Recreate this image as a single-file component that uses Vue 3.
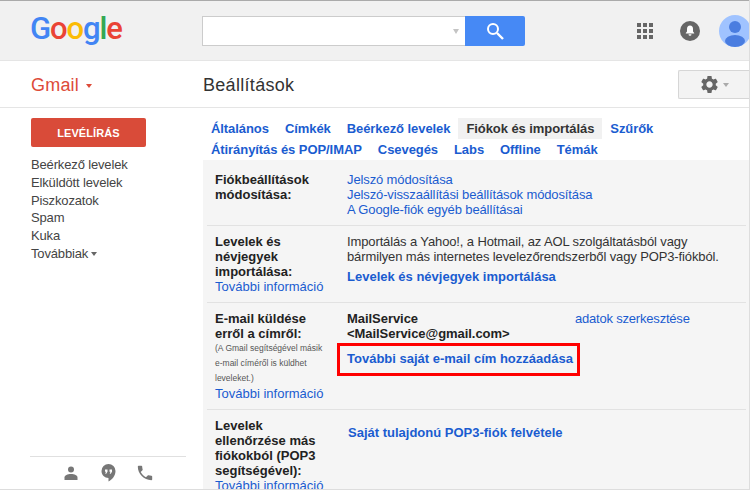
<template>
  <div class="page">
    <header class="topbar">
      <div class="logo">
        <span class="g-blue">G</span><span class="g-red">o</span><span class="g-yellow">o</span><span class="g-blue">g</span><span class="g-green">l</span><span class="g-red">e</span>
      </div>
      <div class="search">
        <div class="search-input"><span class="search-caret"></span></div>
        <button class="search-btn">
          <svg width="20" height="20" viewBox="0 0 20 20" fill="none" stroke="#fff" stroke-width="2">
            <circle cx="8" cy="8" r="5" />
            <path d="M12 12l6 6" stroke-width="2.4" />
          </svg>
        </button>
      </div>
      <div class="top-icons">
        <div class="apps">
          <span v-for="n in 9" :key="n"></span>
        </div>
        <svg class="bell" width="20" height="20" viewBox="0 0 20 20">
          <circle cx="10" cy="10" r="10" fill="#666" />
          <path d="M10 4.6c-2 0-3 1.6-3 3.4v2.6l-1.2 1.3v.6h8.400v-.6L13 10.600V8c0-1.800-1-3.400-3-3.400zM8.500 13.300a1.500 1.500 0 0 0 3 0z" fill="#fff" />
        </svg>
        <svg class="avatar" width="32" height="32" viewBox="0 0 32 32">
          <circle cx="16" cy="16" r="16" fill="#a0c3ff" />
          <circle cx="16" cy="12" r="6" fill="#4a7de0" />
          <ellipse cx="16" cy="26" rx="10" ry="6" fill="#4a7de0" />
        </svg>
      </div>
    </header>

    <div class="subbar">
      <div class="gmail">Gmail<span class="gmail-caret"></span></div>
      <h1 class="title">Beállítások</h1>
      <button class="gear-btn">
        <svg width="21" height="21" viewBox="0 0 24 24">
          <path fill="#666" d="M19.14 12.94c.04-.3.06-.61.06-.94 0-.32-.02-.64-.07-.94l2.03-1.58c.18-.14.23-.41.12-.61l-1.92-3.32c-.12-.22-.37-.29-.59-.22l-2.39.96c-.5-.38-1.03-.7-1.62-.94l-.36-2.54c-.04-.24-.24-.41-.48-.41h-3.84c-.24 0-.43.17-.47.41l-.36 2.54c-.59.24-1.13.57-1.62.94l-2.39-.96c-.22-.08-.47 0-.59.22L2.74 8.87c-.12.21-.08.47.12.61l2.03 1.58c-.05.3-.07.62-.07.94s.02.64.07.94l-2.03 1.58c-.18.14-.23.41-.12.61l1.92 3.32c.12.22.37.29.59.22l2.39-.96c.5.38 1.03.7 1.62.94l.36 2.54c.05.24.24.41.48.41h3.84c.24 0 .44-.17.47-.41l.36-2.54c.59-.24 1.13-.56 1.62-.94l2.39.96c.22.08.47 0 .59-.22l1.92-3.32c.12-.22.07-.47-.12-.61l-2.01-1.58zM12 15.6c-1.98 0-3.6-1.62-3.6-3.6s1.62-3.6 3.6-3.6 3.6 1.62 3.6 3.6-1.62 3.6-3.6 3.6z" />
        </svg>
        <span class="gear-caret"></span>
      </button>
    </div>

    <div class="main">
      <aside class="sidebar">
        <button class="compose">LEVÉLÍRÁS</button>
        <nav class="folders">
          <div v-for="f in folders" :key="f">{{ f }}</div>
          <div>Továbbiak<span class="more-caret"></span></div>
        </nav>
        <div class="side-foot">
          <svg width="14" height="14" viewBox="0 0 14 14"><circle cx="7" cy="3.500" r="3" fill="#777" /><path d="M0.500 14v-2.500c0-2 3-3.500 6.500-3.500s6.500 1.500 6.500 3.500v2.500z" fill="#777" /></svg>
          <svg width="15" height="18" viewBox="0 0 15 18"><path d="M7.500 0a7 7 0 0 0-7 7c0 3.900 3.100 7 7 7v3.500c3.500-1.800 7-5.500 7-10.500a7 7 0 0 0-7-7z" fill="#777" /><path d="M4 5.500h2.500v2.300L5.200 9.800H4.200l.8-2H4zM8.500 5.500H11v2.300L9.700 9.800H8.700l.8-2h-1z" fill="#fff" /></svg>
          <svg width="16" height="16" viewBox="2 2 20 20"><path d="M6.620 10.790c1.440 2.830 3.760 5.140 6.590 6.590l2.200-2.200c.27-.27.67-.36 1.020-.24 1.120.37 2.330.57 3.570.57.55 0 1 .45 1 1V20c0 .55-.45 1-1 1-9.390 0-17-7.610-17-17 0-.55.45-1 1-1h3.500c.55 0 1 .45 1 1 0 1.250.2 2.450.57 3.570.11.35.03.74-.25 1.020l-2.200 2.200z" fill="#777" /></svg>
        </div>
      </aside>

      <section class="content">
        <div class="tabs">
          <div class="tab-row">
            <a v-for="t in tabsTop" :key="t" class="tab" :class="{ active: t === 'Fiókok és importálás' }">{{ t }}</a>
          </div>
          <div class="tab-row">
            <a v-for="t in tabsBottom" :key="t" class="tab">{{ t }}</a>
          </div>
        </div>

        <div class="panel">
          <div class="row first">
            <div class="label"><b>Fiókbeállítások módosítása:</b></div>
            <div class="value">
              <a>Jelszó módosítása</a><br />
              <a>Jelszó-visszaállítási beállítások módosítása</a><br />
              <a>A Google-fiók egyéb beállításai</a>
            </div>
          </div>
          <div class="row">
            <div class="label">
              <b>Levelek és névjegyek importálása:</b>
              <a>További információ</a>
            </div>
            <div class="value import">
              Importálás a Yahoo!, a Hotmail, az AOL szolgáltatásból vagy bármilyen más internetes levelezőrendszerből vagy POP3-fiókból.
              <a class="strong gap">Levelek és névjegyek importálása</a>
            </div>
          </div>
          <div class="row">
            <div class="label">
              <b>E-mail küldése erről a címről:</b>
              <small>(A Gmail segítségével másik e-mail címéről is küldhet leveleket.)</small>
              <a>További információ</a>
            </div>
            <div class="value">
              <div class="send-top">
                <b class="sender">MailService<br />&lt;MailService@gmail.com&gt;</b>
                <a class="edit">adatok szerkesztése</a>
              </div>
              <div class="add-wrap">
                <a class="strong">További saját e-mail cím hozzáadása</a>
                <span class="highlight"></span>
              </div>
            </div>
          </div>
          <div class="row last">
            <div class="label">
              <b>Levelek ellenőrzése más fiókokból (POP3 segítségével):</b>
              <a>További információ</a>
            </div>
            <div class="value">
              <a class="strong pop">Saját tulajdonú POP3-fiók felvétele</a>
            </div>
          </div>
        </div>
      </section>
    </div>
  </div>
</template>

<script setup>
const folders = ['Beérkező levelek', 'Elküldött levelek', 'Piszkozatok', 'Spam', 'Kuka']
const tabsTop = ['Általános', 'Címkék', 'Beérkező levelek', 'Fiókok és importálás', 'Szűrők']
const tabsBottom = ['Átirányítás és POP/IMAP', 'Csevegés', 'Labs', 'Offline', 'Témák']
</script>

<style>
html, body {
  margin: 0;
  overflow: hidden;
  background: #fff;
}
</style>

<style scoped>
.page {
  width: 750px;
  height: 490px;
  overflow: hidden;
  font-family: "Liberation Sans", Arial, sans-serif;
  font-size: 13px;
  color: #222;
  box-sizing: border-box;
  border-bottom: 1px solid #ddd;
  border-right: 1px solid #ddd;
}

a {
  color: #1a5cd0;
}

.topbar {
  height: 61px;
  box-sizing: border-box;
  background: #f1f1f1;
  border-top: 1px solid #aaa;
  border-bottom: 1px solid #e5e5e5;
  display: flex;
  align-items: center;
}

.logo {
  width: 202px;
  padding-left: 30px;
  box-sizing: border-box;
  font-family: Roboto, sans-serif;
  font-weight: 500;
  font-size: 31px;
  letter-spacing: -1.100px;
  line-height: 40px;
  margin-top: -3px;
}

.g-blue { color: #4285f4; }
.g-red { color: #ea4335; }
.g-yellow { color: #fbbc05; }
.g-green { color: #34a853; }

.search {
  display: flex;
  width: 323px;
  height: 30px;
  margin-top: 1px;
}

.search-input {
  flex: 1;
  background: #fff;
  border: 1px solid #ccc;
  border-right: none;
  display: flex;
  align-items: center;
  justify-content: flex-end;
  padding-right: 6px;
}

.search-caret {
  border: 3.500px solid transparent;
  border-top: 5px solid #c4c4c4;
  border-bottom: none;
}

.search-btn {
  width: 60px;
  border: none;
  padding: 0;
  background: #4689f5;
  border-radius: 0 2px 2px 0;
  display: flex;
  align-items: center;
  justify-content: center;
}

.top-icons {
  margin-left: auto;
  margin-right: -2px;
  margin-top: 1px;
  display: flex;
  align-items: center;
  width: 114px;
  flex: none;
}

.apps {
  display: grid;
  grid-template-columns: repeat(3, 4px);
  gap: 2px;
  width: 16px;
  margin-right: 27px;
}

.apps span {
  width: 4px;
  height: 4px;
  background: #666;
}

.bell {
  margin-right: 19px;
}

.avatar {
  flex: none;
}

.subbar {
  height: 47px;
  box-sizing: border-box;
  border-bottom: 1px solid #e5e5e5;
  display: flex;
  align-items: center;
  padding-left: 31px;
}

.gmail {
  width: 172px;
  color: #dd4b39;
  font-size: 18px;
  letter-spacing: 0.2px;
  margin-top: 2px;
}

.gmail-caret {
  display: inline-block;
  margin-left: 7px;
  vertical-align: 3px;
  border: 3px solid transparent;
  border-top: 4px solid #dd4b39;
  border-bottom: none;
}

.title {
  margin: 2px 0 0;
  font-size: 18px;
  font-weight: normal;
  color: #333;
  letter-spacing: 0.3px;
}

.gear-btn {
  margin-left: auto;
  width: 71px;
  height: 29px;
  margin-top: 1px;
  border: 1px solid #d6d6d6;
  border-right: none;
  border-radius: 2px 0 0 2px;
  background: #f3f3f3;
  display: flex;
  align-items: center;
  padding: 0 0 0 20px;
  box-sizing: border-box;
}

.gear-caret {
  margin-left: 3px;
  border: 3.500px solid transparent;
  border-top: 4px solid #aaa;
  border-bottom: none;
}

.main {
  display: flex;
  height: 381px;
}

.sidebar {
  width: 203px;
  flex: none;
  box-sizing: border-box;
  padding: 10px 0 0 31px;
  display: flex;
  flex-direction: column;
}

.compose {
  width: 115px;
  height: 29px;
  flex: none;
  border: none;
  border-radius: 2px;
  background: #d94b39;
  color: #fff;
  font: bold 11px "Liberation Sans", Arial, sans-serif;
  letter-spacing: 0.1px;
  padding: 0;
}

.folders {
  margin-top: 9px;
  color: #444;
  line-height: 17.800px;
  font-size: 13px;
  letter-spacing: -0.15px;
}

.more-caret {
  display: inline-block;
  margin-left: 3px;
  vertical-align: 2px;
  border: 3.500px solid transparent;
  border-top: 4px solid #666;
  border-bottom: none;
}

.side-foot {
  margin-top: auto;
  margin-left: -1px;
  width: 156px;
  height: 33px;
  flex: none;
  box-sizing: border-box;
  border-top: 1px solid #e0e0e0;
  display: grid;
  grid-template-columns: repeat(3, 37px);
  justify-content: center;
  justify-items: center;
  align-items: center;
  padding-bottom: 1px;
}

.content {
  flex: 1;
  min-width: 0;
  display: flex;
  flex-direction: column;
}

.tabs {
  padding: 10px 0 0 3px;
  height: 52px;
  box-sizing: border-box;
  flex: none;
}

.tab-row {
  display: flex;
  height: 21px;
  align-items: center;
  gap: 6px;
}

.tab {
  font-weight: bold;
  padding: 0 5px;
  line-height: 21px;
  letter-spacing: -0.07px;
  white-space: nowrap;
}

.tab.active {
  background: #f1f1f1;
  color: #333;
  padding: 0 8px;
  margin: 0 -3px;
}

.panel {
  flex: 1;
  background: #f5f5f5;
  padding: 0 3px 0 4px;
  min-height: 0;
  overflow: hidden;
}

.row {
  display: flex;
  border-bottom: 1px solid #e2e2e2;
  padding: 8px 0 8px 8px;
  line-height: 15px;
}

.row.first {
  padding-top: 12px;
}

.row.last {
  border-bottom: none;
}

.label {
  width: 132px;
  flex: none;
  box-sizing: border-box;
  padding-right: 20px;
}

.label b,
.label small,
.label a {
  display: block;
}

.label small {
  font-size: 8.500px;
  line-height: 15px;
  color: #555;
}

.value {
  flex: 1;
  color: #333;
  letter-spacing: -0.12px;
}

.value.import {
  padding-right: 20px;
}

.strong {
  font-weight: bold;
  display: block;
  letter-spacing: 0;
}

.gap {
  margin-top: 5px;
}

.send-top {
  display: flex;
}

.sender {
  width: 228px;
  flex: none;
  color: #222;
  letter-spacing: -0.05px;
}

.edit {
  letter-spacing: -0.2px;
}

.add-wrap {
  position: relative;
  margin-top: 10px;
}

.highlight {
  position: absolute;
  left: -10px;
  top: -8px;
  width: 243px;
  height: 33px;
  box-sizing: border-box;
  border: 3px solid #f00;
}

.pop {
  margin-top: 7px;
  margin-left: 1px;
}
</style>
